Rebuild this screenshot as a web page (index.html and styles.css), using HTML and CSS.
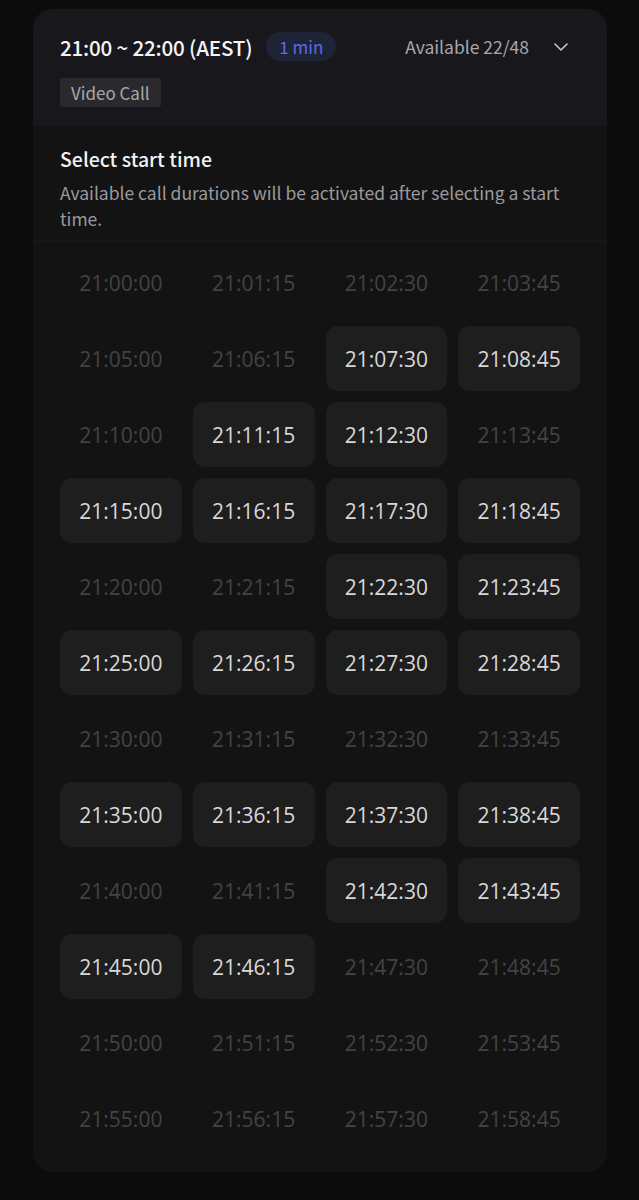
FILE: index.html
```html
<!DOCTYPE html>
<html>
<head>
<meta charset="utf-8">
<link rel="stylesheet" href="styles.css">
</head>
<body>
<div class="card">
  <div class="head">
    <div class="head-row">
      <div class="title">21:00 ~ 22:00 (AEST)</div>
      <div class="pill">1 min</div>
      <div class="avail">Available 22/48</div>
      <svg class="chev" width="16" height="10" viewBox="0 0 16 10"><path d="M2 2 L8 8 L14 2" fill="none" stroke="#c8c8cc" stroke-width="1.6" stroke-linecap="round" stroke-linejoin="round"/></svg>
    </div>
    <div class="tag">Video Call</div>
  </div>
  <div class="intro">
    <div class="intro-title">Select start time</div>
    <div class="intro-desc">Available call durations will be activated after selecting a start time.</div>
  </div>
  <div class="grid">
    <div class="slot off">21:00:00</div><div class="slot off">21:01:15</div><div class="slot off">21:02:30</div><div class="slot off">21:03:45</div>
    <div class="slot off">21:05:00</div><div class="slot off">21:06:15</div><div class="slot on">21:07:30</div><div class="slot on">21:08:45</div>
    <div class="slot off">21:10:00</div><div class="slot on">21:11:15</div><div class="slot on">21:12:30</div><div class="slot off">21:13:45</div>
    <div class="slot on">21:15:00</div><div class="slot on">21:16:15</div><div class="slot on">21:17:30</div><div class="slot on">21:18:45</div>
    <div class="slot off">21:20:00</div><div class="slot off">21:21:15</div><div class="slot on">21:22:30</div><div class="slot on">21:23:45</div>
    <div class="slot on">21:25:00</div><div class="slot on">21:26:15</div><div class="slot on">21:27:30</div><div class="slot on">21:28:45</div>
    <div class="slot off">21:30:00</div><div class="slot off">21:31:15</div><div class="slot off">21:32:30</div><div class="slot off">21:33:45</div>
    <div class="slot on">21:35:00</div><div class="slot on">21:36:15</div><div class="slot on">21:37:30</div><div class="slot on">21:38:45</div>
    <div class="slot off">21:40:00</div><div class="slot off">21:41:15</div><div class="slot on">21:42:30</div><div class="slot on">21:43:45</div>
    <div class="slot on">21:45:00</div><div class="slot on">21:46:15</div><div class="slot off">21:47:30</div><div class="slot off">21:48:45</div>
    <div class="slot off">21:50:00</div><div class="slot off">21:51:15</div><div class="slot off">21:52:30</div><div class="slot off">21:53:45</div>
    <div class="slot off">21:55:00</div><div class="slot off">21:56:15</div><div class="slot off">21:57:30</div><div class="slot off">21:58:45</div>
  </div>
</div>
</body>
</html>
```
FILE: styles.css
```css
html, body {
  margin: 0;
  padding: 0;
  background: #0c0c0c;
}
body {
  padding: 9px 32px 30px 33px;
  font-family: "Noto Sans CJK KR", "Noto Sans", sans-serif;
}
.card {
  background: #131313;
  border-radius: 20px;
  overflow: hidden;
}
.head {
  background: #18181c;
  padding: 20px 27px 17px 27px;
  border-bottom: 1px solid #1a1a1d;
}
.head-row {
  display: flex;
  align-items: center;
  height: 35px;
}
.title {
  color: #f4f4f6;
  font-size: 20.6px;
  font-weight: 500;
  letter-spacing: -0.2px;
}
.pill {
  margin-left: 14px;
  background: #1f2336;
  color: #5b6be8;
  font-size: 17px;
  height: 29px;
  line-height: 29px;
  padding: 0 13px;
  border-radius: 15px;
}
.avail {
  margin-left: auto;
  color: #a8a8ac;
  font-size: 17.5px;
}
.chev {
  margin-left: 24px;
  margin-right: 11px;
}
.tag {
  display: inline-block;
  margin-top: 14px;
  background: #2a2a2e;
  color: #a8a8ac;
  font-size: 17px;
  height: 29px;
  line-height: 29px;
  padding: 0 11px;
  border-radius: 3px;
}
.intro {
  padding: 21px 27px 8px 27px;
  border-bottom: 1px solid #181818;
}
.intro-title {
  color: #f2f2f2;
  font-size: 19.5px;
  font-weight: 500;
  line-height: 26px;
}
.intro-desc {
  margin-top: 8px;
  color: #9a9a9e;
  font-size: 17.5px;
  line-height: 26px;
}
.grid {
  display: grid;
  grid-template-columns: repeat(4, 1fr);
  grid-auto-rows: 65px;
  column-gap: 11px;
  row-gap: 11px;
  padding: 9px 27px 21px 27px;
}
.slot {
  display: flex;
  align-items: center;
  justify-content: center;
  font-family: "Open Sans", sans-serif;
  font-size: 21px;
  border-radius: 12px;
}
.slot.on {
  background: #1e1e1e;
  color: #d8d8d8;
}
.slot.off {
  color: #434343;
}
```
